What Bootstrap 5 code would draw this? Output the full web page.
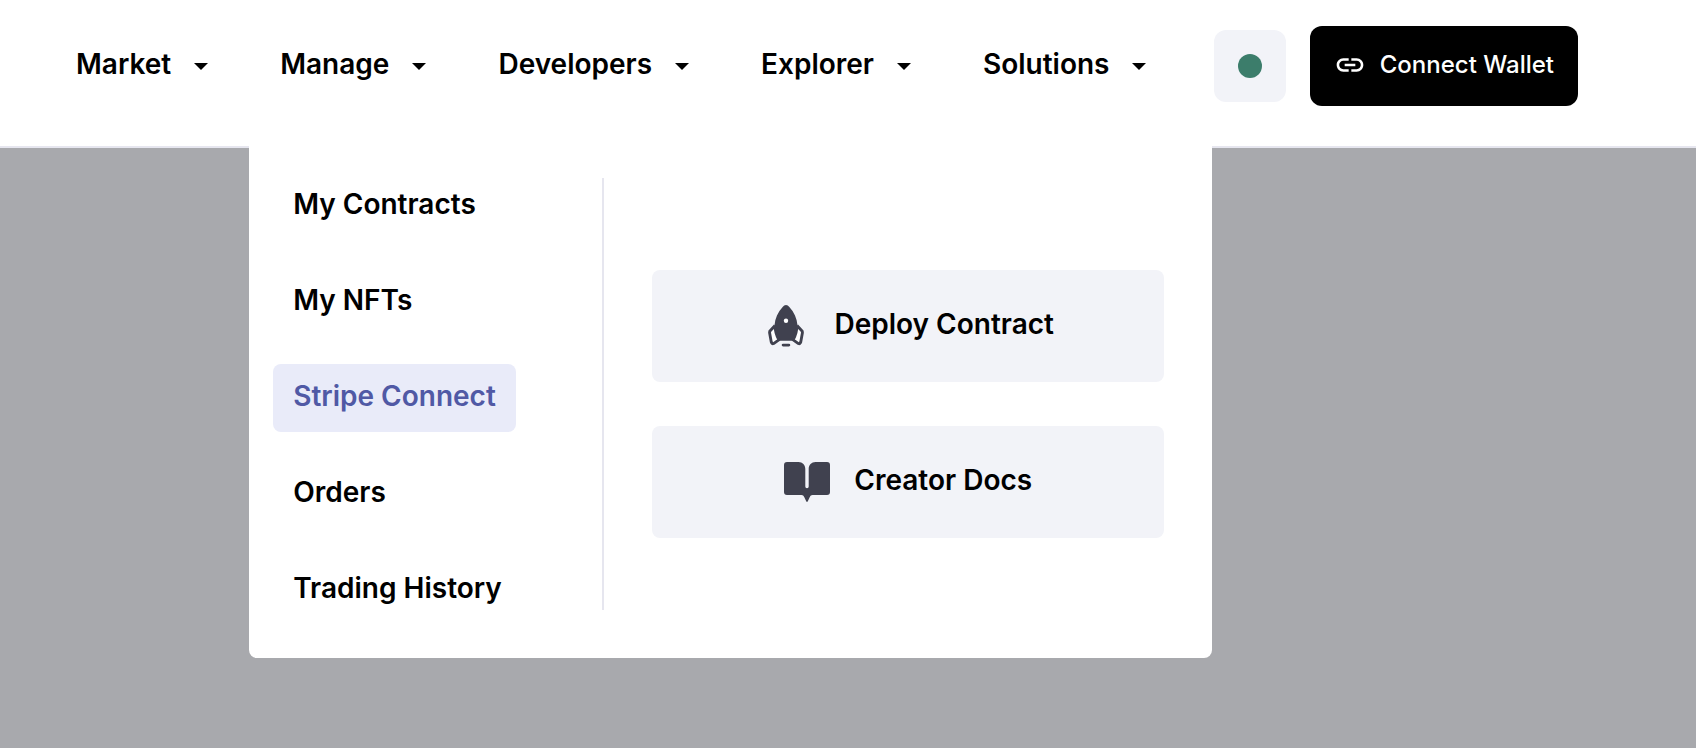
<!DOCTYPE html>
<html lang="en">
<head>
<meta charset="utf-8">
<meta name="viewport" content="width=device-width, initial-scale=1">
<title>Manage</title>
<link href="https://cdn.jsdelivr.net/npm/bootstrap@5.3.0/dist/css/bootstrap.min.css" rel="stylesheet">
<style>
  :root { --ink: #000; --soft: #f2f3f8; --line: #e6e6ef; --icon: #40414f; }
  body { font-family: Inter, "Liberation Sans", sans-serif; color: var(--ink); background: #a8a9ad; min-height: 100vh; }
  .site-header { background: #fff; border-bottom: 2px solid var(--line); padding: 26px 118px 40px 76px; }
  .main-menu { gap: 72px; }
  .menu-toggle { height: 80px; gap: 23px; padding: 0 0 4px; border: 0; background: none; color: var(--ink); font-size: 28px; line-height: 40px; font-weight: 600; white-space: nowrap; }
  .menu-toggle svg { width: 14px; height: 7px; margin-top: 4px; }
  .status-btn { width: 72px; height: 72px; border: 0; border-radius: 12px; background: var(--soft); }
  .status-dot { width: 24px; height: 24px; background: #3c7d6b; }
  .wallet-btn { height: 80px; padding: 0 24px 2px; gap: 14px; border: 0; border-radius: 12px; background: #000; color: #fff; font-size: 24px; font-weight: 500; white-space: nowrap; }
  .mega-menu { top: calc(100% + 40px); left: -31px; width: 963px; padding: 26px 48px 34px 24px; background: #fff; border-radius: 0 0 8px 8px; z-index: 10; }
  .side-links { gap: 28px; }
  .side-link { height: 68px; padding: 0 20px 4px; border-radius: 8px; color: var(--ink); font-size: 28px; line-height: 40px; font-weight: 600; text-decoration: none; white-space: nowrap; }
  .side-link.active { background: #e9ebf9; color: #5059a5; }
  .side-column { width: 329px; }
  .divider { width: 2px; margin: 6px 48px 14px 0; background: var(--line); }
  .card-links { gap: 44px; padding-top: 12px; }
  .card-link-box { height: 112px; border-radius: 8px; background: var(--soft); color: var(--ink); font-size: 28px; line-height: 40px; font-weight: 600; text-decoration: none; white-space: nowrap; }
  .card-link-box span { padding-bottom: 4px; }
  .card-link-box svg { color: var(--icon); }
</style>
</head>
<body>
<header class="site-header d-flex align-items-center">
  <nav aria-label="Main">
    <ul class="main-menu list-unstyled d-flex mb-0">
      <li><button type="button" class="menu-toggle d-flex align-items-center">Market<svg viewBox="0 0 14 7" aria-hidden="true"><path d="M0 0h14L7 7z"/></svg></button></li>
      <li class="position-relative">
        <button type="button" class="menu-toggle d-flex align-items-center" aria-expanded="true" aria-controls="manage-menu">Manage<svg viewBox="0 0 14 7" aria-hidden="true"><path d="M0 0h14L7 7z"/></svg></button>
        <div id="manage-menu" class="mega-menu position-absolute d-flex">
          <div class="side-column">
            <div class="side-links d-flex flex-column align-items-start">
              <a href="#" class="side-link d-flex align-items-center">My Contracts</a>
              <a href="#" class="side-link d-flex align-items-center">My NFTs</a>
              <a href="#" class="side-link active d-flex align-items-center">Stripe Connect</a>
              <a href="#" class="side-link d-flex align-items-center">Orders</a>
              <a href="#" class="side-link d-flex align-items-center">Trading History</a>
            </div>
          </div>
          <div class="divider flex-shrink-0"></div>
          <div class="card-links flex-grow-1 d-flex flex-column justify-content-center">
            <a href="#" class="card-link-box d-flex align-items-center justify-content-center">
              <svg class="me-4" width="48" height="42" viewBox="-6 0 48 44" preserveAspectRatio="xMidYMid meet" aria-hidden="true">
                <path fill="currentColor" fill-rule="evenodd" d="M18 0c-1.300 0-2.500.8-3.500 2C9.500 7.500 6.500 14 6 21c-.2 5.500 1 10.500 4 15.500.4.700 1 1 1.800 1h12.400c.8 0 1.400-.3 1.800-1 3-5 4.200-10 4-15.500-.5-7-3.500-13.500-8.500-19C20.500.8 19.300 0 18 0z"/>
                <circle cx="18" cy="16.500" r="2.300" fill="#fff"/>
                <path fill="#fff" stroke="currentColor" stroke-width="3" stroke-linejoin="round" d="M6.500 21.500 1 27.500 .8 29 2.600 39Q3.200 41.200 5 40.400L10.500 36.500Q6.500 29 6.500 21.500M29.500 21.500 35 27.500 35.200 29 33.400 39Q32.800 41.200 31 40.400L25.500 36.500Q29.500 29 29.500 21.500"/>
                <path stroke="currentColor" stroke-width="3" stroke-linecap="round" d="M15 42h6"/>
              </svg>
              <span>Deploy Contract</span>
            </a>
            <a href="#" class="card-link-box d-flex align-items-center justify-content-center">
              <svg class="me-4" width="46" height="40" viewBox="0 0 46 40" aria-hidden="true">
                <path fill="currentColor" d="M3 0h11.500C18.500 0 21.300 3 21.300 7v17.500a1.700 1.700 0 0 0 3.400 0V7c0-4 2.800-7 6.800-7H43a3 3 0 0 1 3 3v27a3 3 0 0 1-3 3H28.500c-1.300 0-2.200.8-2.700 2L23.800 39.300q-.8 1.300-1.600 0L20.200 35c-.5-1.200-1.400-2-2.700-2H3a3 3 0 0 1-3-3V3a3 3 0 0 1 3-3z"/>
              </svg>
              <span>Creator Docs</span>
            </a>
          </div>
        </div>
      </li>
      <li><button type="button" class="menu-toggle d-flex align-items-center">Developers<svg viewBox="0 0 14 7" aria-hidden="true"><path d="M0 0h14L7 7z"/></svg></button></li>
      <li><button type="button" class="menu-toggle d-flex align-items-center">Explorer<svg viewBox="0 0 14 7" aria-hidden="true"><path d="M0 0h14L7 7z"/></svg></button></li>
      <li><button type="button" class="menu-toggle d-flex align-items-center">Solutions<svg viewBox="0 0 14 7" aria-hidden="true"><path d="M0 0h14L7 7z"/></svg></button></li>
    </ul>
  </nav>
  <div class="d-flex align-items-center gap-4 ms-auto">
    <button type="button" class="status-btn d-flex align-items-center justify-content-center" aria-label="Network status"><span class="status-dot rounded-circle"></span></button>
    <button type="button" class="wallet-btn d-flex align-items-center">
      <svg width="32" height="32" viewBox="0 0 24 24" fill="currentColor" aria-hidden="true"><path d="M3.900 12c0-1.710 1.390-3.100 3.100-3.100h4V7H7c-2.760 0-5 2.240-5 5s2.240 5 5 5h4v-1.900H7c-1.710 0-3.100-1.390-3.100-3.100zM8 13h8v-2H8v2zm9-6h-4v1.900h4c1.710 0 3.100 1.390 3.100 3.100s-1.390 3.100-3.100 3.100h-4V17h4c2.760 0 5-2.240 5-5s-2.240-5-5-5z"/></svg>
      <span>Connect Wallet</span>
    </button>
  </div>
</header>
<script src="https://cdn.jsdelivr.net/npm/bootstrap@5.3.0/dist/js/bootstrap.bundle.min.js"></script>
</body>
</html>
